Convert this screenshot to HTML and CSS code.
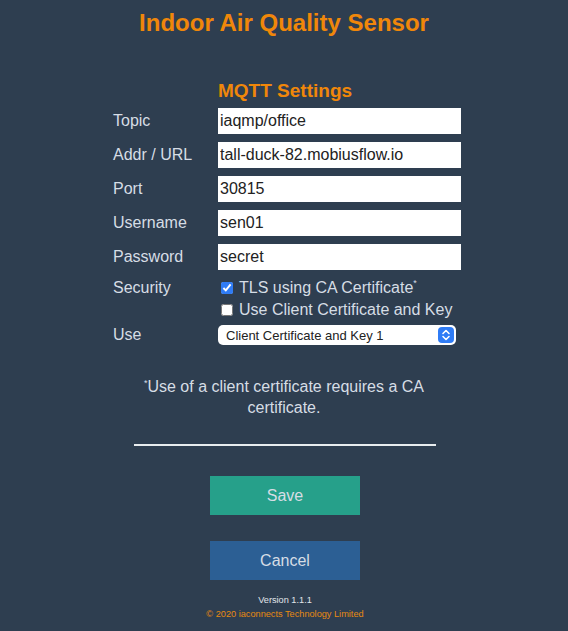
FILE: index.html
```html
<!DOCTYPE html>
<html>
<head>
<meta charset="utf-8">
<link rel="stylesheet" href="styles.css">
</head>
<body>
<h1 class="title">Indoor Air Quality Sensor</h1>
<div class="formwrap">
  <form class="form">
    <div></div>
    <h2 class="subtitle">MQTT Settings</h2>
    <label class="lbl">Topic</label>
    <input class="field" type="text" value="iaqmp/office">
    <label class="lbl">Addr / URL</label>
    <input class="field" type="text" value="tall-duck-82.mobiusflow.io">
    <label class="lbl">Port</label>
    <input class="field" type="text" value="30815">
    <label class="lbl">Username</label>
    <input class="field" type="text" value="sen01">
    <label class="lbl">Password</label>
    <input class="field" type="text" value="secret">
    <label class="lbl lbl-sec">Security</label>
    <div class="checks">
      <label class="chk"><input type="checkbox" checked> TLS using CA Certificate<sup>*</sup></label>
      <label class="chk"><input type="checkbox"> Use Client Certificate and Key</label>
    </div>
    <label class="lbl lbl-use">Use</label>
    <div class="selwrap">
      <select class="sel"><option>Client Certificate and Key 1</option></select>
      <svg class="selicon" width="16" height="16" viewBox="0 0 16 16"><rect x="0" y="0" width="16" height="16" rx="4" fill="#2f7cf6"/><path d="M5 6.5 L8 3.5 L11 6.5 M5 9.5 L8 12.5 L11 9.5" fill="none" stroke="#fff" stroke-width="1.6" stroke-linecap="round" stroke-linejoin="round"/></svg>
    </div>
  </form>
</div>
<p class="note"><sup>*</sup>Use of a client certificate requires a CA certificate.</p>
<hr class="rule">
<div class="buttons">
  <button class="btn btn-save">Save</button>
  <button class="btn btn-cancel">Cancel</button>
</div>
<div class="version">Version 1.1.1</div>
<div class="copy">© 2020 iaconnects Technology Limited</div>
</body>
</html>
```
FILE: styles.css
```css
html, body {
  margin: 0;
  padding: 0;
  background: #2e3e50;
}
body {
  font-family: "Liberation Sans", Arial, sans-serif;
  color: #d6dde5;
  width: 568px;
  height: 631px;
  overflow: hidden;
}
.title {
  margin: 0;
  padding-top: 9px;
  text-align: center;
  color: #f0870a;
  font-size: 24px;
  font-weight: bold;
  line-height: 28px;
}
.formwrap {
  display: flex;
  justify-content: center;
  padding-left: 6px;
  margin-top: 43px;
}
.form {
  display: grid;
  grid-template-columns: 105px 243px;
  row-gap: 8px;
  align-items: center;
}
.subtitle {
  margin: 0 0 -2px 0;
  color: #f0870a;
  font-size: 19px;
  font-weight: bold;
  line-height: 22px;
}
.lbl {
  font-size: 16px;
  line-height: 20px;
}
.field {
  box-sizing: border-box;
  width: 243px;
  height: 26px;
  margin: 0;
  border: 0;
  padding: 0 2px;
  background: #fff;
  color: #222;
  font-family: "Liberation Sans", Arial, sans-serif;
  font-size: 16px;
}
.lbl-sec {
  align-self: start;
}
.checks {
  display: flex;
  flex-direction: column;
  gap: 2px;
}
.chk {
  display: flex;
  align-items: center;
  font-size: 16px;
  line-height: 20px;
}
.chk input {
  margin: 0 6px 0 3px;
  width: 12px;
  height: 12px;
  accent-color: #2f7cf6;
}
.chk sup {
  font-size: 9px;
  align-self: flex-start;
  line-height: 10px;
}
.lbl-use {
  margin-top: -3px;
}
.selwrap {
  position: relative;
  width: 238px;
  height: 20px;
  margin-top: -3px;
}
.sel {
  appearance: none;
  -webkit-appearance: none;
  box-sizing: border-box;
  width: 238px;
  height: 20px;
  margin: 0;
  border: 0;
  border-radius: 5px;
  background: #fff;
  color: #222;
  padding: 0 0 0 8px;
  font-family: "Liberation Sans", Arial, sans-serif;
  font-size: 13px;
}
.selicon {
  position: absolute;
  right: 2px;
  top: 2px;
}
.note {
  margin: 28px auto 0;
  width: 300px;
  text-align: center;
  font-size: 16px;
  line-height: 21px;
}
.note sup {
  font-size: 9px;
}
.rule {
  width: 302px;
  margin: 26px auto 0;
  position: relative;
  left: 1px;
  border: 0;
  border-top: 2px solid #e8ecef;
  height: 0;
}
.buttons {
  display: flex;
  flex-direction: column;
  align-items: center;
  gap: 26px;
  margin-top: 30px;
  padding-left: 2px;
}
.btn {
  width: 150px;
  height: 39px;
  border: 0;
  color: #d6dde5;
  font-family: "Liberation Sans", Arial, sans-serif;
  font-size: 16px;
}
.btn-save { background: #26a08a; }
.btn-cancel { background: #2c5f94; }
.version {
  margin-top: 14px;
  text-align: center;
  font-size: 9.2px;
  line-height: 12px;
  color: #e0e5ea;
  padding-left: 2px;
}
.copy {
  margin-top: 2px;
  text-align: center;
  font-size: 9.2px;
  line-height: 12px;
  color: #e88a10;
  padding-left: 2px;
}
```
